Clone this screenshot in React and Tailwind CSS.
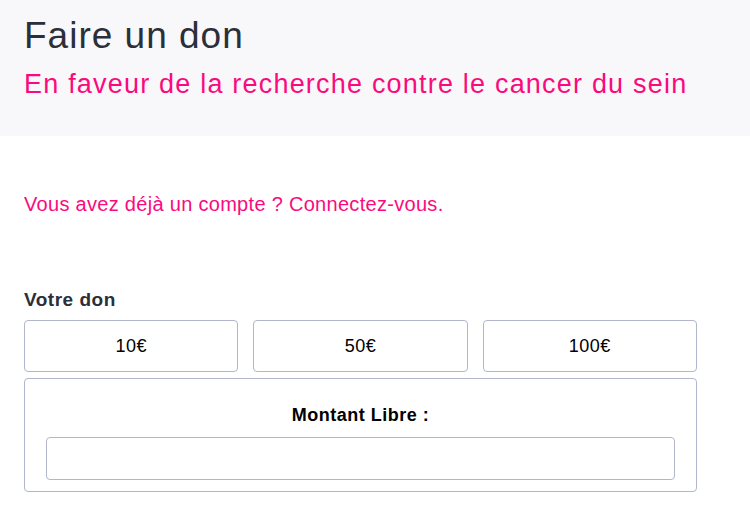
export default function App() {
  const amounts = ["10€", "50€", "100€"];
  return (
    <div className="min-h-[524px] bg-white font-['Liberation_Sans',Arial,sans-serif]">
      <div className="h-[136px] bg-[#f8f8fa] px-6 pt-[14px]">
        <h1 className="text-[37px] leading-[44px] tracking-[1px] text-[#2b2f3a]">Faire un don</h1>
        <p className="mt-[10px] text-[27px] leading-[32px] tracking-[1.2px] text-[#fa0a7e]">
          En faveur de la recherche contre le cancer du sein
        </p>
      </div>
      <div className="px-6">
        <p className="mt-[56px] text-[20px] leading-[24px] tracking-[0.3px] text-[#fa0a7e]">
          Vous avez déjà un compte ? Connectez-vous.
        </p>
        <p className="mt-[72px] text-[19px] font-bold leading-[24px] tracking-[0.5px] text-[#2b2f3a]">
          Votre don
        </p>
        <div className="mt-[8px] w-[673px]">
          <div className="grid grid-cols-3 gap-[15px]">
            {amounts.map((a) => (
              <button
                key={a}
                className="h-[52px] rounded-[4px] border border-[#b2b6cd] bg-white text-[18px] tracking-[0.5px] text-black"
              >
                {a}
              </button>
            ))}
          </div>
          <div className="mt-[6px] rounded-[4px] border border-[#b2b6cd] px-[21px] pb-[11px] pt-[25px]">
            <p className="text-center text-[18px] font-bold leading-[22px] tracking-[0.5px] text-black">
              Montant Libre :
            </p>
            <input
              type="text"
              className="mt-[11px] block h-[43px] w-full rounded-[4px] border border-[#b2b6cd] bg-white"
            />
          </div>
        </div>
      </div>
    </div>
  );
}
